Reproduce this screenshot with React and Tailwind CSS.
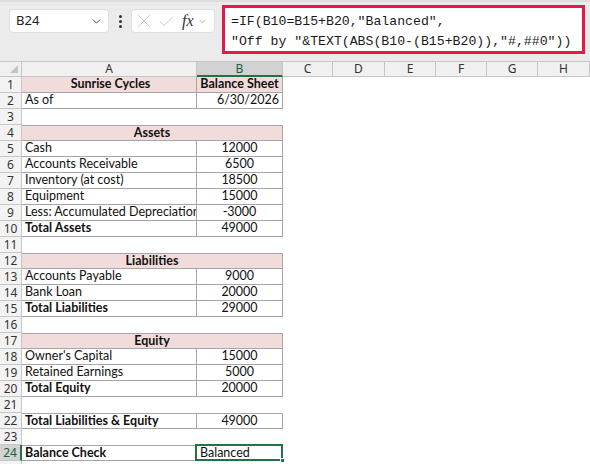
import { ChevronDown, X, Check } from "lucide-react";

const cellFont = { fontFamily: "Lato, 'Liberation Sans', sans-serif" };
const uiFont = { fontFamily: "'Noto Sans', 'Open Sans', sans-serif" };

// balance sheet rows, col A / col B
const rows = [
  { n: 1, a: "Sunrise Cycles", b: "Balance Sheet", head: true },
  { n: 2, a: "As of", b: "6/30/2026", right: true },
  { n: 3 },
  { n: 4, merged: "Assets", top: true },
  { n: 5, a: "Cash", b: "12000" },
  { n: 6, a: "Accounts Receivable", b: "6500" },
  { n: 7, a: "Inventory (at cost)", b: "18500" },
  { n: 8, a: "Equipment", b: "15000" },
  { n: 9, a: "Less: Accumulated Depreciation", b: "-3000" },
  { n: 10, a: "Total Assets", b: "49000", bold: true },
  { n: 11 },
  { n: 12, merged: "Liabilities", top: true },
  { n: 13, a: "Accounts Payable", b: "9000" },
  { n: 14, a: "Bank Loan", b: "20000" },
  { n: 15, a: "Total Liabilities", b: "29000", bold: true },
  { n: 16 },
  { n: 17, merged: "Equity", top: true },
  { n: 18, a: "Owner's Capital", b: "15000" },
  { n: 19, a: "Retained Earnings", b: "5000" },
  { n: 20, a: "Total Equity", b: "20000", bold: true },
  { n: 21 },
  { n: 22, a: "Total Liabilities & Equity", b: "49000", bold: true, top: true },
  { n: 23 },
  { n: 24, a: "Balance Check", b: "Balanced", bold: true, top: true, selected: true },
  { n: 25 },
];

const cols = ["C", "D", "E", "F", "G", "H"];

function Toolbar() {
  return (
    <div className="h-[61px] bg-[#ebebeb] flex items-start border-t-2 border-[#dedede]" style={uiFont}>
      <div className="mt-[7px] ml-[9px] w-[100px] h-[24px] bg-white rounded-[4px] border border-[#e0e0e0] flex items-center justify-between pl-[6px] pr-[5px]">
        <span className="text-[13px] text-[#222]">B24</span>
        <ChevronDown size={13} strokeWidth={1.6} className="text-[#333]" />
      </div>
      <div className="w-[22px] h-[24px] mt-[7px] flex flex-col items-center justify-center gap-[2px]">
        <span className="w-[3px] h-[3px] rounded-full bg-[#333]" />
        <span className="w-[3px] h-[3px] rounded-full bg-[#333]" />
        <span className="w-[3px] h-[3px] rounded-full bg-[#333]" />
      </div>
      <div className="mt-[7px] w-[84px] h-[24px] bg-white rounded-[4px] border border-[#e0e0e0] flex items-center pl-[1px]">
        <X size={22} strokeWidth={1} className="text-[#c4c4c4]" />
        <Check size={19} strokeWidth={1.1} className="text-[#c4c4c4] ml-[2px]" />
        <span
          className="ml-[6px] text-[16px] italic text-[#333] leading-none"
          style={{ fontFamily: "'Liberation Serif', serif" }}
        >
          fx
        </span>
        <ChevronDown size={11} strokeWidth={1.4} className="text-[#888] ml-[3px]" />
      </div>
      <div className="mt-[3px] ml-[7px] w-[363px] h-[49px] bg-white border-[3px] border-[#e31b4b] px-[6px] pt-[4px]">
        <pre
          className="text-[13.2px] leading-[20px] text-[#1a1a1a]"
          style={{ fontFamily: "'Liberation Mono', monospace" }}
        >
          {'=IF(B10=B15+B20,"Balanced",\n"Off by "&TEXT(ABS(B10-(B15+B20)),"#,##0"))'}
        </pre>
      </div>
    </div>
  );
}

function RowHeader({ n, selected }) {
  return (
    <div
      className={`h-4 flex items-center justify-center text-[12px] border-b ${
        selected
          ? "bg-[#d2d2d2] text-[#1d5f38] border-r-2 border-r-[#217346] border-b-[#c6c6c6]"
          : "bg-[#f3f3f3] text-[#333] border-r border-[#c6c6c6]"
      }`}
      style={uiFont}
    >
      {n}
    </div>
  );
}

function SheetRow({ r }) {
  const line = "border-[#a6a6a6]";
  const topCls = r.top ? "border-t" : "";
  let body;
  if (r.merged) {
    body = (
      <div className={`col-span-2 h-4 bg-[#f2dcdb] border-r border-b ${topCls} ${line} flex items-center justify-center font-bold text-[12.5px]`}>
        {r.merged}
      </div>
    );
  } else if (r.a) {
    body = (
      <>
        <div
          className={`h-4 border-r border-b ${topCls} ${line} flex items-center pl-[3px] overflow-hidden whitespace-nowrap text-[12.5px] ${
            r.head ? "bg-[#f2dcdb] justify-center font-bold pl-0" : ""
          } ${r.bold ? "font-bold" : ""}`}
        >
          {r.a}
        </div>
        <div
          className={`relative h-4 border-r border-b ${topCls} ${line} flex items-center whitespace-nowrap text-[12.5px] ${
            r.head ? "bg-[#f2dcdb] justify-center font-bold" : r.right ? "justify-end pr-[3px]" : r.selected ? "pl-[3px]" : "justify-center"
          }`}
        >
          {r.b}
          {r.selected && (
            <>
              <div className="absolute -left-[2px] -top-[2px] -right-[1px] -bottom-[1px] border-2 border-[#217346]" />
              <div className="absolute -right-[3px] -bottom-[3px] w-[5px] h-[5px] bg-[#217346] border border-white" />
            </>
          )}
        </div>
      </>
    );
  } else {
    body = <div className="col-span-2 h-4" />;
  }
  return (
    <>
      <RowHeader n={r.n} selected={r.selected} />
      {body}
      <div className="col-span-6 h-4" />
    </>
  );
}

export default function App() {
  return (
    <div className="w-[590px] h-[464px] overflow-hidden bg-white">
      <Toolbar />
      <div
        className="grid grid-cols-[22px_175px_86px_50px_52px_51px_51px_51px_52px] text-[#111]"
        style={cellFont}
      >
        {/* column headers */}
        <div className="relative h-4 bg-[#f0f0f0] border-t border-r border-b border-[#c6c6c6]">
          <div
            className="absolute right-[3px] bottom-[3px] w-0 h-0 border-l-[8px] border-l-transparent border-b-[8px] border-b-[#c4c4c4]"
          />
        </div>
        <div className="h-4 bg-[#f0f0f0] border-t border-r border-b border-[#c6c6c6] flex items-center justify-center text-[12px] text-[#333]" style={uiFont}>
          A
        </div>
        <div className="h-4 bg-[#d2d2d2] border-t border-r border-t-[#c6c6c6] border-r-[#c6c6c6] border-b-2 border-b-[#217346] flex items-center justify-center text-[12px] text-[#1d5f38]" style={uiFont}>
          B
        </div>
        {cols.map((c) => (
          <div
            key={c}
            className="h-4 bg-[#f0f0f0] border-t border-r border-b border-[#c6c6c6] flex items-center justify-center text-[12px] text-[#333]"
            style={uiFont}
          >
            {c}
          </div>
        ))}
        {rows.map((r) => (
          <SheetRow key={r.n} r={r} />
        ))}
      </div>
    </div>
  );
}
